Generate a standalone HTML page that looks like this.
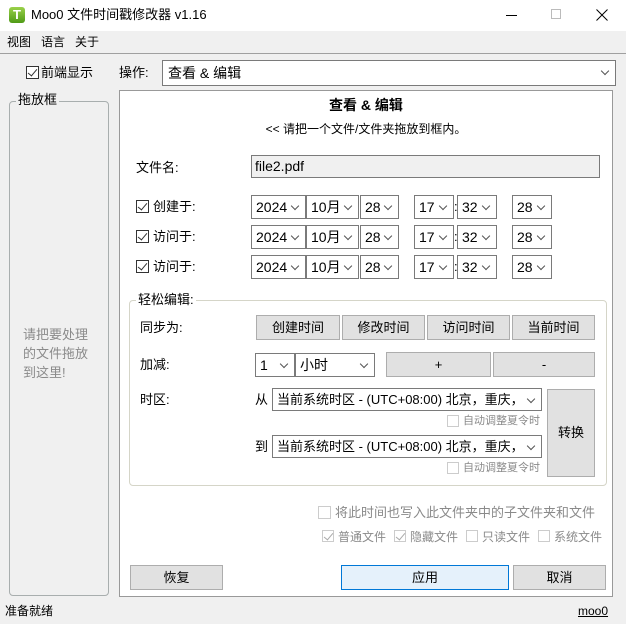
<!DOCTYPE html>
<html><head><meta charset="utf-8"><style>
*{box-sizing:border-box;margin:0;padding:0}
body{width:626px;height:624px;position:relative;overflow:hidden;background:#f0f0f0;font-family:"Liberation Sans","Noto Sans CJK SC",sans-serif;font-size:13px;color:#000}
.a{position:absolute;white-space:nowrap}
.t{position:absolute;white-space:nowrap;line-height:16px}
.sel{position:absolute;border:1px solid #7a7a7a;background:#fff;height:24px;line-height:22px;padding-left:4px;font-size:14px}
.sel:after{content:"";position:absolute;right:7px;top:7px;width:5px;height:5px;border-right:1px solid #555;border-bottom:1px solid #555;transform:rotate(45deg)}
.btn{position:absolute;border:1px solid #adadad;background:#e1e1e1;text-align:center;font-size:13px}
.cb{position:absolute;width:13px;height:13px;border:1px solid #333;background:#fff}
.cb.on:after{content:"";position:absolute;left:3px;top:0px;width:4px;height:8px;border-right:1.5px solid #333;border-bottom:1.5px solid #333;transform:rotate(40deg)}
.cb.g{border-color:#ccc}
.cb.g.on:after{border-color:#aaa}
.gray{color:#8a8a8a}
</style></head><body>
<div class="a" style="left:0;top:0;width:626px;height:31px;background:#fff"></div>
<div class="a" style="left:9px;top:7px;width:16px;height:16px;border-radius:3px;background:linear-gradient(#9ad14a,#4f9a16);color:#fff;font-weight:bold;font-size:13px;text-align:center;line-height:16px">T</div>
<div class="t" style="left:31px;top:7px;font-size:13px">Moo0 文件时间戳修改器 v1.16</div>
<div class="a" style="left:506px;top:15px;width:11px;height:1px;background:#000"></div>
<div class="a" style="left:551px;top:9px;width:10px;height:10px;border:1px solid #bbb"></div>
<svg class="a" style="left:596px;top:9px" width="12" height="12"><path d="M0.5 0.5L11.5 11.5M11.5 0.5L0.5 11.5" stroke="#000" stroke-width="1"/></svg>
<div class="t" style="left:7px;top:34px;font-size:12px">视图</div>
<div class="t" style="left:41px;top:34px;font-size:12px">语言</div>
<div class="t" style="left:75px;top:34px;font-size:12px">关于</div>
<div class="a" style="left:0;top:53px;width:626px;height:1px;background:#a0a0a0"></div>
<div class="cb on" style="left:26px;top:66px"></div>
<div class="t" style="left:41px;top:65px">前端显示</div>
<div class="t" style="left:119px;top:65px">操作:</div>
<div class="sel" style="left:162px;top:60px;width:454px;height:26px;line-height:24px;padding-left:5px">查看 &amp; 编辑</div>
<div class="a" style="left:9px;top:101px;width:100px;height:495px;border:1px solid #a8aeae;border-radius:4px"></div>
<div class="t" style="left:16px;top:92px;background:#f0f0f0;padding:0 2px">拖放框</div>
<div class="t gray" style="left:23px;top:325px;line-height:19px">请把要处理<br>的文件拖放<br>到这里!</div>
<div class="a" style="left:119px;top:90px;width:494px;height:507px;background:#fff;border:1px solid #999"></div>
<div class="t" style="left:119px;top:97px;width:494px;text-align:center;font-weight:bold;font-size:14px">查看 &amp; 编辑</div>
<div class="t" style="left:119px;top:121px;width:494px;text-align:center;font-size:12px">&lt;&lt; 请把一个文件/文件夹拖放到框内。</div>
<div class="t" style="left:136px;top:160px">文件名:</div>
<div class="a" style="left:251px;top:155px;width:349px;height:23px;border:1px solid #7a7a7a;background:#f0f0f0;line-height:21px;padding-left:3px;font-size:14px">file2.pdf</div>
<div class="cb on" style="left:136px;top:200px"></div><div class="t" style="left:153px;top:199px">创建于:</div>
<div class="cb on" style="left:136px;top:230px"></div><div class="t" style="left:153px;top:229px">访问于:</div>
<div class="cb on" style="left:136px;top:260px"></div><div class="t" style="left:153px;top:259px">访问于:</div>
<div class="sel" style="left:251px;top:195px;width:55px">2024</div><div class="sel" style="left:306px;top:195px;width:53px">10月</div><div class="sel" style="left:360px;top:195px;width:39px">28</div><div class="sel" style="left:414px;top:195px;width:40px">17</div><div class="t" style="left:454px;top:199px">:</div><div class="sel" style="left:457px;top:195px;width:40px">32</div><div class="sel" style="left:512px;top:195px;width:40px">28</div>
<div class="sel" style="left:251px;top:225px;width:55px">2024</div><div class="sel" style="left:306px;top:225px;width:53px">10月</div><div class="sel" style="left:360px;top:225px;width:39px">28</div><div class="sel" style="left:414px;top:225px;width:40px">17</div><div class="t" style="left:454px;top:229px">:</div><div class="sel" style="left:457px;top:225px;width:40px">32</div><div class="sel" style="left:512px;top:225px;width:40px">28</div>
<div class="sel" style="left:251px;top:255px;width:55px">2024</div><div class="sel" style="left:306px;top:255px;width:53px">10月</div><div class="sel" style="left:360px;top:255px;width:39px">28</div><div class="sel" style="left:414px;top:255px;width:40px">17</div><div class="t" style="left:454px;top:259px">:</div><div class="sel" style="left:457px;top:255px;width:40px">32</div><div class="sel" style="left:512px;top:255px;width:40px">28</div>
<div class="a" style="left:129px;top:300px;width:478px;height:186px;border:1px solid #d5d5c8;border-radius:4px"></div>
<div class="t" style="left:136px;top:292px;background:#fff;padding:0 2px">轻松编辑:</div>
<div class="t" style="left:140px;top:320px">同步为:</div>
<div class="btn" style="left:256px;top:315px;width:84px;height:25px;line-height:23px">创建时间</div>
<div class="btn" style="left:342px;top:315px;width:83px;height:25px;line-height:23px">修改时间</div>
<div class="btn" style="left:427px;top:315px;width:83px;height:25px;line-height:23px">访问时间</div>
<div class="btn" style="left:512px;top:315px;width:83px;height:25px;line-height:23px">当前时间</div>
<div class="t" style="left:140px;top:357px">加减:</div>
<div class="sel" style="left:255px;top:353px;width:40px">1</div>
<div class="sel" style="left:295px;top:353px;width:80px">小时</div>
<div class="btn" style="left:386px;top:352px;width:105px;height:25px;line-height:23px">+</div>
<div class="btn" style="left:493px;top:352px;width:102px;height:25px;line-height:23px">-</div>
<div class="t" style="left:140px;top:392px">时区:</div>
<div class="t" style="left:255px;top:392px">从</div>
<div class="sel" style="left:272px;top:388px;width:270px;height:23px;line-height:21px;font-size:13px">当前系统时区 - (UTC+08:00) 北京，重庆，</div>
<div class="cb g" style="left:447px;top:415px;width:12px;height:12px"></div><div class="t gray" style="left:463px;top:413px;font-size:11px">自动调整夏令时</div>
<div class="t" style="left:255px;top:439px">到</div>
<div class="sel" style="left:272px;top:435px;width:270px;height:23px;line-height:21px;font-size:13px">当前系统时区 - (UTC+08:00) 北京，重庆，</div>
<div class="cb g" style="left:447px;top:462px;width:12px;height:12px"></div><div class="t gray" style="left:463px;top:460px;font-size:11px">自动调整夏令时</div>
<div class="btn" style="left:547px;top:389px;width:48px;height:88px;line-height:86px">转换</div>
<div class="cb g" style="left:318px;top:506px"></div><div class="t gray" style="left:335px;top:505px">将此时间也写入此文件夹中的子文件夹和文件</div>
<div class="cb g on" style="left:322px;top:530px;width:12px;height:12px"></div><div class="t gray" style="left:338px;top:529px;font-size:12px">普通文件</div>
<div class="cb g on" style="left:394px;top:530px;width:12px;height:12px"></div><div class="t gray" style="left:410px;top:529px;font-size:12px">隐藏文件</div>
<div class="cb g" style="left:466px;top:530px;width:12px;height:12px"></div><div class="t gray" style="left:482px;top:529px;font-size:12px">只读文件</div>
<div class="cb g" style="left:538px;top:530px;width:12px;height:12px"></div><div class="t gray" style="left:554px;top:529px;font-size:12px">系统文件</div>
<div class="btn" style="left:130px;top:565px;width:93px;height:25px;line-height:23px">恢复</div>
<div class="btn" style="left:341px;top:565px;width:168px;height:25px;line-height:23px;border-color:#0078d7;background:#e5f1fb">应用</div>
<div class="btn" style="left:513px;top:565px;width:93px;height:25px;line-height:23px">取消</div>
<div class="t" style="left:5px;top:603px;font-size:12px">准备就绪</div>
<div class="t" style="left:578px;top:603px;font-size:12px;text-decoration:underline">moo0</div>
</body></html>
